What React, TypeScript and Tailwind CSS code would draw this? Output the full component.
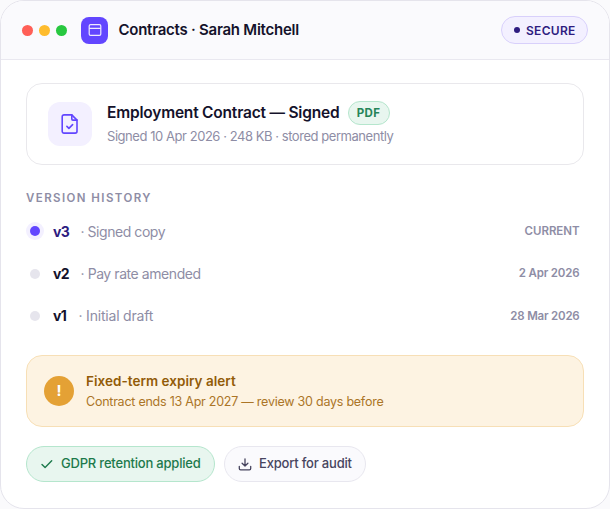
import clsx from 'clsx';

const VERSIONS = [
  { id: 'v3', label: 'Signed copy', date: 'CURRENT', current: true, idClass: 'w-4', labelClass: 'ml-[11.5px] tracking-[-0.45px]', dateClass: 'tracking-[-0.05px]' },
  { id: 'v2', label: 'Pay rate amended', date: '2 Apr 2026', current: false, idClass: 'w-4', labelClass: 'ml-[11.5px] tracking-[-0.43px]', dateClass: 'tracking-[-0.15px]' },
  { id: 'v1', label: 'Initial draft', date: '28 Mar 2026', current: false, idClass: 'w-3.5', labelClass: 'ml-[11.5px] tracking-[-0.2px]', dateClass: 'tracking-[-0.2px]' },
];

function WindowIcon() {
  return (
    <svg width="14" height="14" viewBox="0 0 14 14" fill="none" stroke="#eeeaff" strokeWidth="1.2" strokeLinejoin="round">
      <rect x="1.2" y="1.7" width="11.6" height="10.6" rx="1.4" />
      <path d="M1.2 5.3h11.6" />
    </svg>
  );
}

function FileCheckIcon() {
  return (
    <svg width="22" height="22" viewBox="0 0 22 22" fill="none" stroke="#6246ff" strokeWidth="1.6" strokeLinecap="round" strokeLinejoin="round">
      <path d="M12.8 1.9H5a1.8 1.8 0 0 0-1.8 1.8v14.6A1.8 1.8 0 0 0 5 20.1h11.2a1.8 1.8 0 0 0 1.8-1.8V7.1z" />
      <path d="M12.8 1.9v4.1a1.1 1.1 0 0 0 1.1 1.1H18" />
      <path d="M7.9 13.4l2 2 3.7-3.8" />
    </svg>
  );
}

function Header() {
  return (
    <header className="flex h-[59px] items-center border-b border-[#e9e8f0] bg-[#fafafd] px-[21px]">
      <div className="flex gap-1.5">
        <span className="size-[11px] rounded-full bg-[#ff5f57]" />
        <span className="size-[11px] rounded-full bg-[#febc2e]" />
        <span className="size-[11px] rounded-full bg-[#28c840]" />
      </div>
      <div className="ml-[14px] flex size-[27px] items-center justify-center rounded-lg bg-[#6246ff]">
        <WindowIcon />
      </div>
      <h1 className="ml-[10.5px] pt-px text-[15px] font-semibold tracking-[-0.25px] whitespace-nowrap text-[#14122b]">
        Contracts · Sarah Mitchell
      </h1>
      <div className="ml-auto flex h-7 w-[87px] items-center rounded-full border border-[#d8d0fb] bg-[#f3f0ff] pl-[11.5px] text-[12px] font-semibold tracking-[0.3px] text-[#2e1c80]">
        <span className="mr-1.5 size-[6.5px] rounded-full bg-[#2e1c80]" />
        <span className="pt-px">SECURE</span>
      </div>
    </header>
  );
}

export default function App() {
  return (
    <div className="h-[509px] w-[610px] overflow-hidden bg-[#fafafc] font-['Inter',sans-serif]">
      <div className="h-[509px] overflow-hidden rounded-3xl border border-[#e5e4ec] bg-white">
        <Header />

        <main className="px-[25px] pt-[23px]">
          <section className="flex h-[82px] items-center rounded-2xl border border-[#e9e8ec] pl-[21px]">
            <div className="flex size-11 items-center justify-center rounded-xl bg-[#f3f0ff]">
              <FileCheckIcon />
            </div>
            <div className="ml-[15px] whitespace-nowrap">
              <div className="flex h-6 items-center">
                <h2 className="w-[232px] text-[15.5px] font-semibold tracking-[-0.2px] text-[#14122b]">Employment Contract — Signed</h2>
                <span className="ml-[8.5px] flex h-6 w-[42px] items-center justify-center rounded-full border border-[#b5e6cd] bg-[#e8f6ef] pt-0.5 text-[11.5px] font-bold tracking-[0.4px] text-[#258558]">
                  PDF
                </span>
              </div>
              <p className="text-[13px] leading-[22px] tracking-[-0.45px] text-[#8e8da5]">
                Signed 10 Apr 2026 · 248 KB · stored permanently
              </p>
            </div>
          </section>

          <h3 className="mt-[25px] text-[11.5px] leading-4 font-semibold tracking-[1.42px] text-[#8e8da5]">VERSION HISTORY</h3>

          <ul className="mt-1">
            {VERSIONS.map((v) => (
              <li key={v.id} className="flex h-[42.4px] items-center pr-[4.5px] pl-1 whitespace-nowrap">
                <span
                  className={clsx(
                    'size-[10px] rounded-full',
                    v.current ? 'bg-[#6246ff] ring-4 ring-[#f3f0ff]' : 'bg-[#e6e5ed]',
                  )}
                />
                <span className={clsx('ml-[13px] text-[14px] font-bold tracking-[-0.7px]', v.idClass, v.current ? 'text-[#2e1c80]' : 'text-[#14122b]')}>
                  {v.id}
                </span>
                <span className={clsx('text-[14px] text-[#8e8da5]', v.labelClass)}>· {v.label}</span>
                <span className={clsx('ml-auto pt-px text-[11.5px] font-semibold text-[#8e8da5]', v.dateClass)}>{v.date}</span>
              </li>
            ))}
          </ul>

          <section className="mt-[18px] flex h-[72px] items-center rounded-2xl border border-[#f7dfb6] bg-[#fdf3e2] pl-[17px] whitespace-nowrap">
            <div className="flex size-[30px] items-center justify-center rounded-full bg-[#e4a135] text-[15px] font-bold text-white">!</div>
            <div className="ml-3">
              <p className="text-[13.5px] leading-5 font-semibold tracking-[0.03px] text-[#925b08]">Fixed-term expiry alert</p>
              <p className="text-[12.5px] leading-[21px] tracking-[-0.24px] text-[#ab7527]">Contract ends 13 Apr 2027 — review 30 days before</p>
            </div>
          </section>

          <div className="mt-[19px] flex gap-[9px] text-[13px] font-medium whitespace-nowrap">
            <div className="flex h-9 w-[189px] items-center rounded-full border border-[#b5e6cd] bg-[#e8f6ef] pl-[13px] tracking-[-0.2px] text-[#1d7a4c]">
              <svg width="14" height="14" viewBox="0 0 14 14" fill="none" stroke="currentColor" strokeWidth="1.4" strokeLinecap="round" strokeLinejoin="round">
                <path d="M2 7.4l3.1 3.2 6.6-6.8" />
              </svg>
              <span className="ml-[7px]">GDPR retention applied</span>
            </div>
            <button className="flex h-9 w-[142px] items-center rounded-full border border-[#e8e7ef] bg-[#fafafd] pl-[13px] tracking-[-0.2px] text-[#47455f]">
              <svg width="14" height="14" viewBox="0 0 14 14" fill="none" stroke="currentColor" strokeWidth="1.3" strokeLinecap="round" strokeLinejoin="round">
                <path d="M7 1.8v7M4.1 6.2L7 9l2.9-2.8M1.3 9.3v2.2a1.3 1.3 0 0 0 1.3 1.3h8.8a1.3 1.3 0 0 0 1.3-1.3V9.3" />
              </svg>
              <span className="ml-[7px]">Export for audit</span>
            </button>
          </div>
        </main>
      </div>
    </div>
  );
}
